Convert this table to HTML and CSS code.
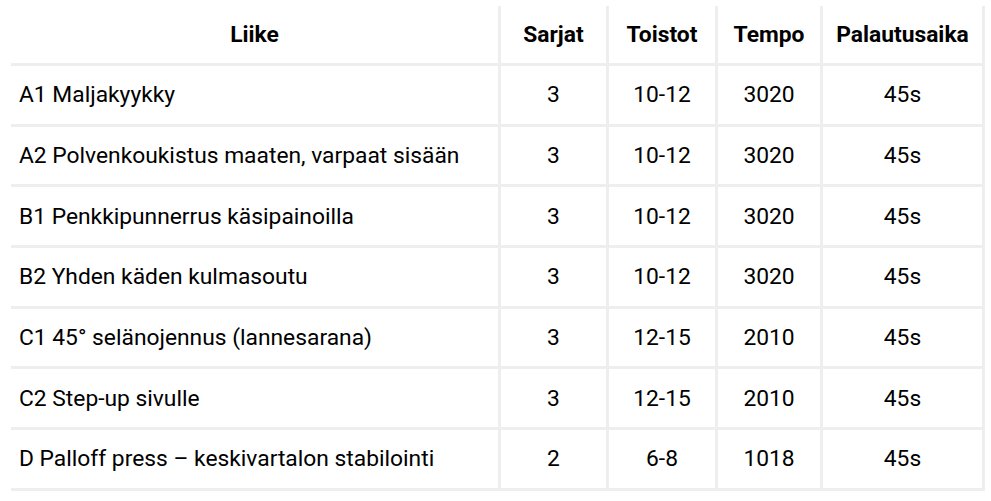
FILE: index.html
```html
<!DOCTYPE html>
<html lang="fi">
<head>
<meta charset="utf-8">
<title>Harjoitusohjelma</title>
<link rel="stylesheet" href="styles.css">
</head>
<body>
<div class="wrap">
<table class="program">
  <colgroup>
    <col class="c-move">
    <col class="c-sets">
    <col class="c-reps">
    <col class="c-tempo">
    <col class="c-rest">
  </colgroup>
  <thead>
    <tr><th>Liike</th><th>Sarjat</th><th>Toistot</th><th>Tempo</th><th>Palautusaika</th></tr>
  </thead>
  <tbody>
    <tr><td class="move">A1 Maljakyykky</td><td>3</td><td>10-12</td><td>3020</td><td>45s</td></tr>
    <tr><td class="move">A2 Polvenkoukistus maaten, varpaat sisään</td><td>3</td><td>10-12</td><td>3020</td><td>45s</td></tr>
    <tr><td class="move">B1 Penkkipunnerrus käsipainoilla</td><td>3</td><td>10-12</td><td>3020</td><td>45s</td></tr>
    <tr><td class="move">B2 Yhden käden kulmasoutu</td><td>3</td><td>10-12</td><td>3020</td><td>45s</td></tr>
    <tr><td class="move">C1 45° selänojennus (lannesarana)</td><td>3</td><td>12-15</td><td>2010</td><td>45s</td></tr>
    <tr><td class="move">C2 Step-up sivulle</td><td>3</td><td>12-15</td><td>2010</td><td>45s</td></tr>
    <tr><td class="move">D Palloff press – keskivartalon stabilointi</td><td>2</td><td>6-8</td><td>1018</td><td>45s</td></tr>
  </tbody>
</table>
</div>
</body>
</html>
```
FILE: styles.css
```css
html, body {
  margin: 0;
  padding: 0;
  background: #ffffff;
}
.wrap {
  padding: 6px 0 0 11px;
}
.program {
  table-layout: fixed;
  width: 974px;
  border-collapse: separate;
  border-spacing: 0;
  font-family: Roboto, "Liberation Sans", sans-serif;
  font-size: 22.8px;
  color: #000;
}
.c-move { width: 490px; }
.c-sets { width: 108px; }
.c-reps { width: 109px; }
.c-tempo { width: 105px; }
.c-rest { width: 162px; }
.program th,
.program td {
  box-sizing: border-box;
  border-right: 3px solid #eeeeee;
  border-bottom: 3px solid #eeeeee;
  text-align: center;
  vertical-align: middle;
  padding: 0 8px;
  white-space: nowrap;
}
.program th {
  height: 60px;
  font-weight: 700;
}
.program td {
  height: 60.7px;
  font-weight: 400;
}
.program td.move {
  text-align: left;
}
```
